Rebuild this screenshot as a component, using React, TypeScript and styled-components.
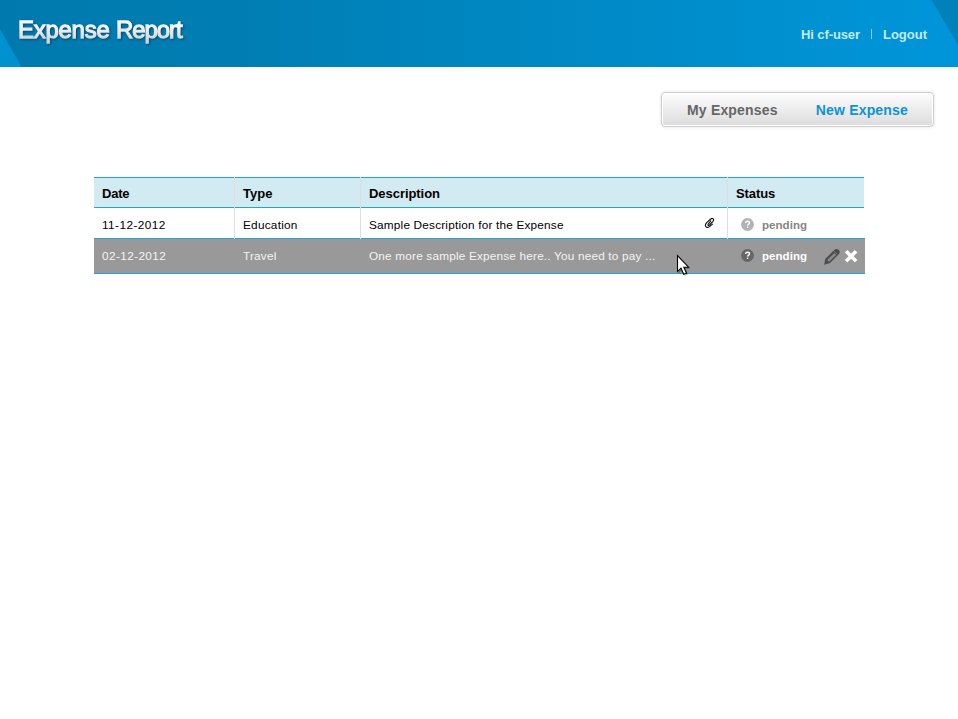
import React from "react";
import styled, { createGlobalStyle } from "styled-components";

const GlobalStyle = createGlobalStyle`
  body {
    margin: 0;
    background: #fff;
    font-family: "Liberation Sans", Arial, sans-serif;
  }
`;

const Page = styled.div`
  width: 958px;
  height: 719px;
  overflow: hidden;
`;

const Header = styled.header`
  position: relative;
  box-sizing: border-box;
  height: 67px;
  display: flex;
  justify-content: space-between;
  align-items: flex-start;
  padding: 14px 31px 0 18px;
  background: linear-gradient(90deg, #007aae 0%, #007db2 22%, #0095d8 97%);
`;

const Corners = styled.svg`
  position: absolute;
  inset: 0;
`;

const Logo = styled.h1`
  position: relative;
  margin: 1px 0 0;
  padding-right: 4px;
  font-size: 24px;
  line-height: 30px;
  font-weight: 400;
  letter-spacing: -0.27px;
  white-space: nowrap;
  color: transparent;
  -webkit-text-stroke: 1.3px transparent;
  background: linear-gradient(#fff 25%, #d3d5d7 85%);
  background-clip: text;
  -webkit-background-clip: text;
  filter: drop-shadow(1px 1px 1px rgba(0, 35, 60, 0.55));
`;

const TightWord = styled.span`
  letter-spacing: -1.05px;
`;

const Account = styled.div`
  position: relative;
  display: flex;
  align-items: center;
  margin-top: 13px;
  height: 16px;
  font-size: 13px;
  line-height: 16px;
  font-weight: 700;
  color: #c3e9f4;
`;

const UserName = styled.span`
  letter-spacing: -0.1px;
`;

const Divider = styled.span`
  width: 1px;
  height: 10px;
  margin: 0 11px 2px 11px;
  background: #8accea;
`;

const Nav = styled.nav`
  box-sizing: border-box;
  display: flex;
  width: 273px;
  height: 35px;
  margin: 25px 24px 0 auto;
  padding: 0 25px 0 25px;
  justify-content: space-between;
  border: 1px solid #cfcfcf;
  border-radius: 4px;
  background: linear-gradient(#fdfdfd, #dcdcdc);
  box-shadow: inset 0 0 0 1px #fff, 0 0 3px rgba(0, 0, 0, 0.14);
`;

const NavItem = styled.a<{ $active?: boolean }>`
  font-size: 14px;
  line-height: 34px;
  font-weight: 700;
  letter-spacing: 0.18px;
  color: ${(p) => (p.$active ? "#0b94d5" : "#666")};
`;

const Table = styled.div`
  width: 770px;
  margin: 50px 0 0 94px;
`;

type Kind = "head" | "plain" | "hover";

const Row = styled.div<{ $kind: Kind }>`
  display: grid;
  grid-template-columns: 141px 126px 367px 136px;
  height: ${(p) => (p.$kind === "hover" ? 35 : 31)}px;
  width: ${(p) => (p.$kind === "head" ? 770 : 771)}px;
  background: ${(p) =>
    p.$kind === "head" ? "#d2eaf1" : p.$kind === "hover" ? "#999" : "#fff"};
  color: ${(p) => (p.$kind === "hover" ? "#f4f4f4" : "#000")};
  font-size: ${(p) => (p.$kind === "head" ? 13 : 11.8)}px;
  font-weight: ${(p) => (p.$kind === "head" ? 700 : 400)};
`;

const cellPadding: Record<Kind, string> = {
  head: "2px 0 0 8px",
  plain: "3px 0 0 8px",
  hover: "0 0 1px 8px",
};

const Cell = styled.div<{ $kind: Kind; $tracking?: number }>`
  box-sizing: border-box;
  display: flex;
  align-items: center;
  justify-content: space-between;
  min-width: 0;
  padding: ${(p) => cellPadding[p.$kind]};
  white-space: nowrap;
  letter-spacing: ${(p) => p.$tracking ?? 0}px;
  border-right: ${(p) => (p.$kind === "hover" ? 0 : 1)}px solid #dedede;
  box-shadow: inset 0 -1px #1ba6dc${(p) => (p.$kind === "head" ? ", inset 0 1px #1ba6dc" : "")};

  &:last-child {
    border-right: 0;
    margin-right: ${(p) => (p.$kind === "head" ? 0 : -1)}px;
  }
`;

const Clip = styled.svg`
  margin: 0 12px 4px 0;
`;

const Status = styled.div<{ $raised?: boolean }>`
  display: flex;
  align-items: center;
  padding: 0 0 ${(p) => (p.$raised ? 2 : 1)}px 5px;
`;

const StatusText = styled.span<{ $hover?: boolean }>`
  margin: 1px 0 0 8px;
  font-weight: 700;
  font-size: 11.5px;
  letter-spacing: 0.05px;
  color: ${(p) => (p.$hover ? "#fff" : "#858585")};
`;

const Actions = styled.div`
  display: flex;
  align-items: center;
  gap: 1px;
  margin: 1px 5px 0 0;
`;

const Cursor = styled.svg`
  position: absolute;
  left: 676px;
  top: 254px;
`;

function Question({ fill }: { fill: string }) {
  return (
    <svg width="13" height="13" viewBox="0 0 13 13">
      <circle cx="6.5" cy="6.5" r="6.4" fill={fill} />
      <path
        d="M4.6 5.1C4.6 3.8 5.4 3.2 6.5 3.2s2 .6 2 1.7c0 1.2-1.9 1.3-1.9 2.7M6.6 8.6v1.5"
        fill="none"
        stroke="#fff"
        strokeWidth="1.4"
      />
    </svg>
  );
}

export default function App() {
  return (
    <Page>
      <GlobalStyle />
      <Header>
        <Corners width="958" height="67">
          <path d="M0 29 21.5 67H0Z" fill="#0091d0" />
          <path d="M931.5 0H958V45Z" fill="#0081ba" />
        </Corners>
        <Logo>
          Expense <TightWord>Report</TightWord>
        </Logo>
        <Account>
          <UserName>Hi cf-user</UserName>
          <Divider />
          <span>Logout</span>
        </Account>
      </Header>
      <Nav>
        <NavItem>My Expenses</NavItem>
        <NavItem $active>New Expense</NavItem>
      </Nav>
      <Table>
        <Row $kind="head">
          <Cell $kind="head" $tracking={-0.2}>Date</Cell>
          <Cell $kind="head">Type</Cell>
          <Cell $kind="head" $tracking={-0.05}>Description</Cell>
          <Cell $kind="head" $tracking={-0.1}>Status</Cell>
        </Row>
        <Row $kind="plain">
          <Cell $kind="plain" $tracking={0.42}>11-12-2012</Cell>
          <Cell $kind="plain" $tracking={0.24}>Education</Cell>
          <Cell $kind="plain" $tracking={0.19}>
            Sample Description for the Expense
            <Clip width="11" height="12" viewBox="0 0 11 12">
              <path
                d="M7.1 3.7 4.2 7.1C3.4 8.2 4.6 9 5.5 8L9 4.4C10.5 2.7 8.7.4 6.7 2L2.7 5.7C-.2 8.8 2.4 11.5 5.2 9.8L8.8 6.8"
                fill="none"
                stroke="#111"
                strokeWidth="1.1"
              />
            </Clip>
          </Cell>
          <Cell $kind="plain">
            <Status>
              <Question fill="#b2b2b2" />
              <StatusText>pending</StatusText>
            </Status>
          </Cell>
        </Row>
        <Row $kind="hover">
          <Cell $kind="hover" $tracking={0.38}>02-12-2012</Cell>
          <Cell $kind="hover" $tracking={0.2}>Travel</Cell>
          <Cell $kind="hover" $tracking={0.18}>One more sample Expense here.. You need to pay ...</Cell>
          <Cell $kind="hover">
            <Status $raised>
              <Question fill="#666" />
              <StatusText $hover>pending</StatusText>
            </Status>
            <Actions>
              <svg width="18" height="18" viewBox="0 0 18 18">
                <path
                  d="M1.2 16.8 2.2 11 11.3 2C12.7.7 14.4.7 15.8 2 17.2 3.5 17 4.9 15.7 6.3L7 15Z"
                  fill="#4c4c4c"
                />
                <path d="M4.2 12.1 11.4 5 13.2 6.8 6 13.8Z" fill="#8c8c8c" />
                <path d="m11.4 3.4 3.2 3.2" stroke="#777" strokeWidth="0.8" />
              </svg>
              <svg width="18" height="18" viewBox="0 0 18 18">
                <path d="m4.1 3.2 10 10M14.1 3.2l-10 10" stroke="#fff" strokeWidth="3.6" />
              </svg>
            </Actions>
          </Cell>
        </Row>
      </Table>
      <Cursor width="15" height="22" viewBox="0 0 15 22">
        <path d="M2 3v17l4-3.5L9 22l3-1.5L9.5 15H14Z" fill="#000" opacity=".25" />
        <path
          d="M1.5 1.7V17.3L5 14.2 7.7 20.2 10.5 19 7.8 13.2H12.6Z"
          fill="#fff"
          stroke="#000"
          strokeWidth="1.1"
        />
      </Cursor>
    </Page>
  );
}
